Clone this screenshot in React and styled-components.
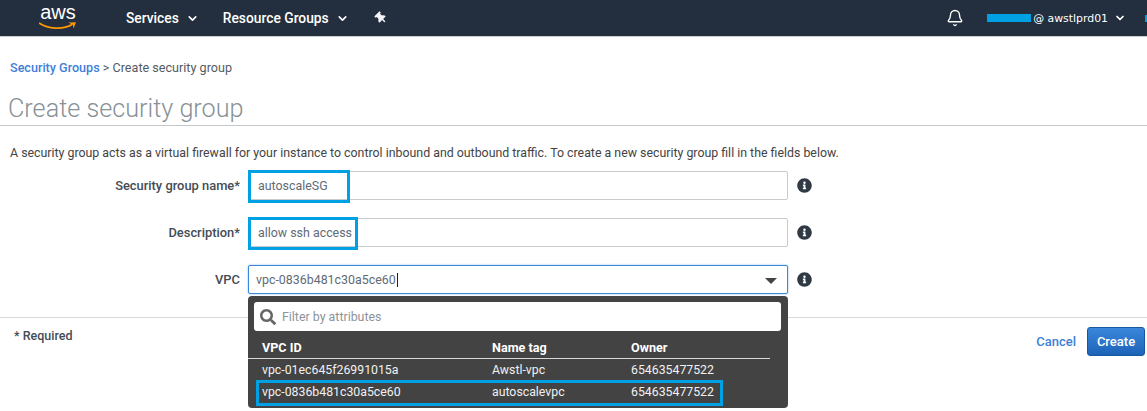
import React from "react";
import styled, { createGlobalStyle } from "styled-components";
import { Bell, ChevronDown } from "lucide-react";
import { FaInfoCircle, FaThumbtack, FaSearch } from "react-icons/fa";

const GlobalStyle = createGlobalStyle`
  html, body {
    margin: 0;
    background: #fff;
    font-family: Roboto, "Liberation Sans", sans-serif;
    overflow: hidden;
  }
  * { box-sizing: border-box; }
`;

const Page = styled.div`
  width: 1147px;
  height: 411px;
  overflow: hidden;
`;

const Nav = styled.header`
  display: flex;
  align-items: center;
  height: 37px;
  background: #232f3e;
  border-bottom: 1px solid #c9ccd0;
  color: #fff;
  font-size: 13.8px;
  padding-left: 39px;
`;

const Logo = styled.div`
  position: relative;
  align-self: flex-start;
  width: 38px;
  height: 30px;
  margin-top: 1px;
  margin-right: 49px;
  span {
    display: block;
    font-family: "Liberation Sans", sans-serif;
    font-size: 20px;
    line-height: 23px;
    text-align: center;
  }
  svg {
    position: absolute;
    left: 0;
    top: 20px;
  }
`;

const NavItem = styled.div`
  display: flex;
  align-items: center;
  margin-right: ${(p) => p.$gap}px;
  font-weight: 500;
  svg { margin-left: 7px; }
`;

const PinWrap = styled.div`
  display: flex;
  color: #f4f5f6;
  transform: rotate(-45deg);
`;

const NavRight = styled.div`
  display: flex;
  align-items: center;
  margin-left: auto;
`;

const AccountBar = styled.div`
  width: 44px;
  height: 8px;
  background: #00a1e4;
  margin: 0 2px 0 23px;
`;

const Account = styled.div`
  display: flex;
  align-items: center;
  font-family: "DejaVu Sans", sans-serif;
  font-size: 10.9px;
  svg { margin-left: 6px; }
`;

const EdgeMark = styled.div`
  width: 2px;
  height: 7px;
  margin-left: 19px;
  background: #00a1e4;
`;

const Crumbs = styled.div`
  padding: 23px 0 0 10px;
  height: 53px;
  font-size: 12.6px;
  line-height: 15px;
  color: #545b64;
  a { color: #3f7fd8; font-weight: 500; }
`;

const Title = styled.h1`
  margin: 0;
  height: 36px;
  padding-left: 8px;
  border-bottom: 1px solid #c4c7ca;
  font-size: 25.2px;
  line-height: 38px;
  font-weight: 300;
  color: #879196;
`;

const Intro = styled.p`
  margin: 0;
  padding: 20px 0 0 10px;
  height: 45px;
  font-size: 12.36px;
  line-height: 15px;
  color: #444;
`;

const Form = styled.div`
  display: flex;
  flex-direction: column;
  gap: 18px;
  height: 146px;
`;

const Row = styled.div`
  display: flex;
  align-items: center;
  height: 29px;
`;

const Label = styled.label`
  width: 240px;
  margin-right: 8px;
  text-align: right;
  font-size: 12.9px;
  font-weight: 500;
  color: #444c55;
`;

const Field = styled.div`
  position: relative;
  display: flex;
  align-items: center;
  justify-content: space-between;
  width: 540px;
  height: 29px;
  padding: 0 10px 0 ${(p) => (p.$focused ? 7 : 9)}px;
  background: #fff;
  border: 1px solid ${(p) => (p.$focused ? "#3b87d8" : "#c8cbce")};
  border-radius: 2px;
  box-shadow: ${(p) => (p.$focused ? "0 0 2px #7fb2ea" : "none")};
  font-size: 12.4px;
  color: #5f6b76;
`;

const Highlight = styled.div`
  position: absolute;
  left: -1px;
  top: -2px;
  width: ${(p) => p.$width}px;
  height: 33px;
  border: 3px solid #00a1e4;
`;

const Cursor = styled.span`
  border-left: 1px solid #222;
  height: 14px;
  margin-left: 1px;
`;

const Value = styled.div`
  display: flex;
  align-items: center;
`;

const Caret = styled.div`
  width: 0;
  height: 0;
  border-left: 6px solid transparent;
  border-right: 6px solid transparent;
  border-top: 6px solid #444;
  margin-top: 2px;
`;

const Info = styled.div`
  display: flex;
  margin-left: 9px;
  color: #2f3a44;
`;

const Dropdown = styled.div`
  position: absolute;
  left: -1px;
  top: 30px;
  width: 540px;
  height: 112px;
  padding: 6px 7px 0 6px;
  background: #434343;
  border-radius: 4px;
  color: #fff;
  z-index: 2;
`;

const Filter = styled.div`
  display: flex;
  align-items: center;
  height: 29px;
  padding-left: 6px;
  background: #fff;
  border-radius: 3px;
  font-size: 12.4px;
  color: #8d9499;
  svg { margin-right: 6px; color: #666; }
`;

const Head = styled.div`
  display: grid;
  grid-template-columns: 230px 139px 1fr;
  align-items: center;
  width: 522px;
  height: 28px;
  margin: 0 0 0 -6px;
  padding: 6px 0 0 14px;
  border-bottom: 1px solid #d8d8d8;
  font-size: 12.6px;
  font-weight: 700;
`;

const Option = styled.div`
  display: grid;
  grid-template-columns: 230px 139px 1fr;
  align-items: center;
  height: 22px;
  margin-left: 2px;
  padding-left: 6px;
  font-size: 12.3px;
  color: #f1f1f1;
`;

const OptionBox = styled.div`
  position: absolute;
  left: 8px;
  top: 84px;
  width: 467px;
  height: 26px;
  border: 3px solid #00a1e4;
`;

const Footer = styled.footer`
  display: flex;
  align-items: flex-start;
  justify-content: space-between;
  height: 50px;
  padding: 9px 2px 0 14px;
  border-top: 1px solid #d8dadc;
`;

const Required = styled.div`
  margin-top: 1px;
  font-size: 12.5px;
  line-height: 15px;
  font-weight: 500;
  color: #444c55;
`;

const Actions = styled.div`
  display: flex;
  align-items: center;
  gap: 11px;
  font-size: 13px;
  font-weight: 500;
`;

const Cancel = styled.a`
  color: #3d7fd6;
`;

const CreateButton = styled.button`
  width: 58px;
  height: 29px;
  padding: 0;
  border: 1px solid #15589f;
  border-radius: 3px;
  background: linear-gradient(#3a87dc, #1c63b7);
  color: #fff;
  font: inherit;
`;

function AwsLogo() {
  return (
    <Logo>
      <span>aws</span>
      <svg width="38" height="10" viewBox="0 0 38 10" fill="none">
        <path d="M0 2 C9 8 24 9 33 3.5" stroke="#f90" strokeWidth="1.7" />
        <path d="M29.5 1.5 L37 1.2 L34.5 7.5 L34 4 Z" fill="#f90" />
      </svg>
    </Logo>
  );
}

function HelpIcon() {
  return (
    <Info>
      <FaInfoCircle size={15} />
    </Info>
  );
}

export default function App() {
  return (
    <Page>
      <GlobalStyle />
      <Nav>
        <AwsLogo />
        <NavItem $gap={24}>
          Services
          <ChevronDown size={13} strokeWidth={3} />
        </NavItem>
        <NavItem $gap={26}>
          Resource Groups
          <ChevronDown size={13} strokeWidth={3} />
        </NavItem>
        <PinWrap>
          <FaThumbtack size={12} />
        </PinWrap>
        <NavRight>
          <Bell size={18} strokeWidth={1.8} />
          <AccountBar />
          <Account>
            @ awstlprd01
            <ChevronDown size={12} strokeWidth={3.5} />
          </Account>
          <EdgeMark />
        </NavRight>
      </Nav>

      <Crumbs>
        <a>Security Groups</a> &gt; Create security group
      </Crumbs>
      <Title>Create security group</Title>
      <Intro>
        A security group acts as a virtual firewall for your instance to control inbound and
        outbound traffic. To create a new security group fill in the fields below.
      </Intro>

      <Form>
        <Row>
          <Label>Security group name*</Label>
          <Field>
            autoscaleSG
            <Highlight $width={102} />
          </Field>
          <HelpIcon />
        </Row>
        <Row>
          <Label>Description*</Label>
          <Field>
            allow ssh access
            <Highlight $width={110} />
          </Field>
          <HelpIcon />
        </Row>
        <Row>
          <Label>VPC</Label>
          <Field $focused>
            <Value>
              vpc-0836b481c30a5ce60
              <Cursor />
            </Value>
            <Caret />
            <Dropdown>
              <Filter>
                <FaSearch size={16} />
                Filter by attributes
              </Filter>
              <Head>
                <span>VPC ID</span>
                <span>Name tag</span>
                <span>Owner</span>
              </Head>
              <Option>
                <span>vpc-01ec645f26991015a</span>
                <span>Awstl-vpc</span>
                <span>654635477522</span>
              </Option>
              <Option>
                <span>vpc-0836b481c30a5ce60</span>
                <span>autoscalevpc</span>
                <span>654635477522</span>
              </Option>
              <OptionBox />
            </Dropdown>
          </Field>
          <HelpIcon />
        </Row>
      </Form>

      <Footer>
        <Required>* Required</Required>
        <Actions>
          <Cancel>Cancel</Cancel>
          <CreateButton>Create</CreateButton>
        </Actions>
      </Footer>
    </Page>
  );
}
